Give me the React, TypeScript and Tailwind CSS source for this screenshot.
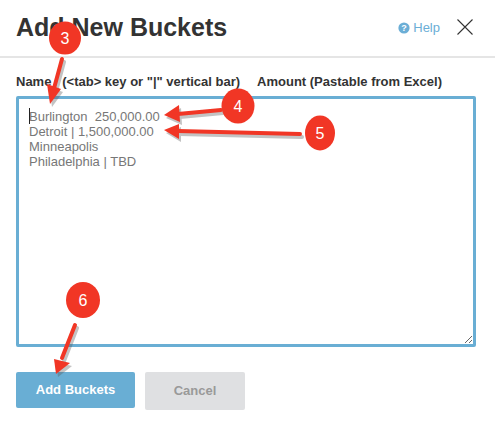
import { useState } from 'react';

// Red callout: numbered circle
function Callout({ cx, cy, rx, ry, n }: { cx: number; cy: number; rx: number; ry: number; n: number }) {
  return (
    <g>
      <ellipse cx={cx} cy={cy} rx={rx} ry={ry} fill="#f13625" />
      <text x={cx} y={cy + 6} textAnchor="middle" fontSize="16" fill="#ffffff" fontFamily="'Liberation Sans', Arial, sans-serif">
        {n}
      </text>
    </g>
  );
}

// Red arrow with a soft shadow
function Arrow({ x1, y1, x2, y2, head }: { x1: number; y1: number; x2: number; y2: number; head: string }) {
  return (
    <g>
      <g fill="#555555" stroke="#555555" opacity="0.35" transform="translate(2 3)">
        <line x1={x1} y1={y1} x2={x2} y2={y2} strokeWidth="4" strokeLinecap="round" />
        <polygon points={head} stroke="none" />
      </g>
      <line x1={x1} y1={y1} x2={x2} y2={y2} stroke="#f13625" strokeWidth="4" strokeLinecap="round" />
      <polygon points={head} fill="#f13625" />
    </g>
  );
}

export default function App() {
  const [value, setValue] = useState('Burlington  250,000.00\nDetroit | 1,500,000.00\nMinneapolis\nPhiladelphia | TBD');

  return (
    <div className="relative w-[495px] h-[428px] overflow-hidden bg-white font-['Liberation_Sans',Arial,sans-serif] text-[#333333]">
      {/* Header */}
      <div className="h-[58px] border-b-2 border-[#e5e5e5] pl-4 pr-[22px] flex items-center justify-between">
        <h1 className="text-[25px] leading-[30px] font-bold mb-[2px]">Add New Buckets</h1>
        <div className="flex items-center gap-[17px] mb-[2px]">
          <div className="flex items-center gap-[3px] text-[#6baed6] text-[13px] mt-[1px]">
            <svg width="12" height="12" viewBox="0 0 12 12">
              <circle cx="6" cy="6" r="5.6" fill="#6baed6" />
              <text x="6" y="9.2" textAnchor="middle" fontSize="9" fontWeight="700" fill="#ffffff" fontFamily="'Liberation Sans', Arial, sans-serif">?</text>
            </svg>
            <span>Help</span>
          </div>
          <svg width="16" height="16" viewBox="0 0 16 16" fill="none" stroke="#333333" strokeWidth="1.1">
            <path d="M0.5 0.5 L15.5 15.5 M15.5 0.5 L0.5 15.5" />
          </svg>
        </div>
      </div>

      <div className="px-4">
        {/* Column labels */}
        <div className="flex h-[15px] mt-[16px] text-[13px] leading-[15px] font-bold">
          <span className="whitespace-pre">{'Name   (<tab> key or "|" vertical bar)'}</span>
          <span className="ml-[17px]">Amount (Pastable from Excel)</span>
        </div>

        {/* Paste box */}
        <textarea
          value={value}
          onChange={(e) => setValue(e.target.value)}
          className="block mt-[7px] w-[460px] h-[251px] border-[3px] border-[#69aed4] rounded-[2px] pl-[10px] pt-[10px] text-[13px] leading-[15px] text-[#777777] outline-none"
        />

        {/* Actions */}
        <div className="flex items-start gap-[10px] mt-[25px]">
          <button className="w-[119px] h-[36px] rounded-[2px] bg-[#69aed4] text-white text-[13px] font-bold">Add Buckets</button>
          <button className="w-[100px] h-[38px] rounded-[2px] bg-[#dfe0e2] text-[#999999] text-[13px] font-bold">Cancel</button>
        </div>
      </div>

      {/* Text cursor */}
      <div className="absolute left-[29px] top-[108px] w-px h-[16px] bg-[#222222]" />

      {/* Screenshot annotations */}
      <svg className="absolute inset-0 pointer-events-none" width="495" height="428" viewBox="0 0 495 428">
        <Arrow x1={62} y1={59} x2={53} y2={92} head="47,84 61,89 50,104" />
        <Arrow x1={221} y1={110} x2={178} y2={114} head="179,105 180,122 164,115" />
        <Arrow x1={300} y1={134} x2={178} y2={131} head="179,124 179,139 164,130" />
        <Arrow x1={75} y1={325} x2={62} y2={358} head="54,359 70,363 56,374" />
        <Callout cx={65} cy={38} rx={16} ry={16.5} n={3} />
        <Callout cx={238} cy={106} rx={16.5} ry={17.5} n={4} />
        <Callout cx={320} cy={133} rx={15} ry={17.5} n={5} />
        <Callout cx={83} cy={300} rx={17} ry={18} n={6} />
      </svg>
    </div>
  );
}
